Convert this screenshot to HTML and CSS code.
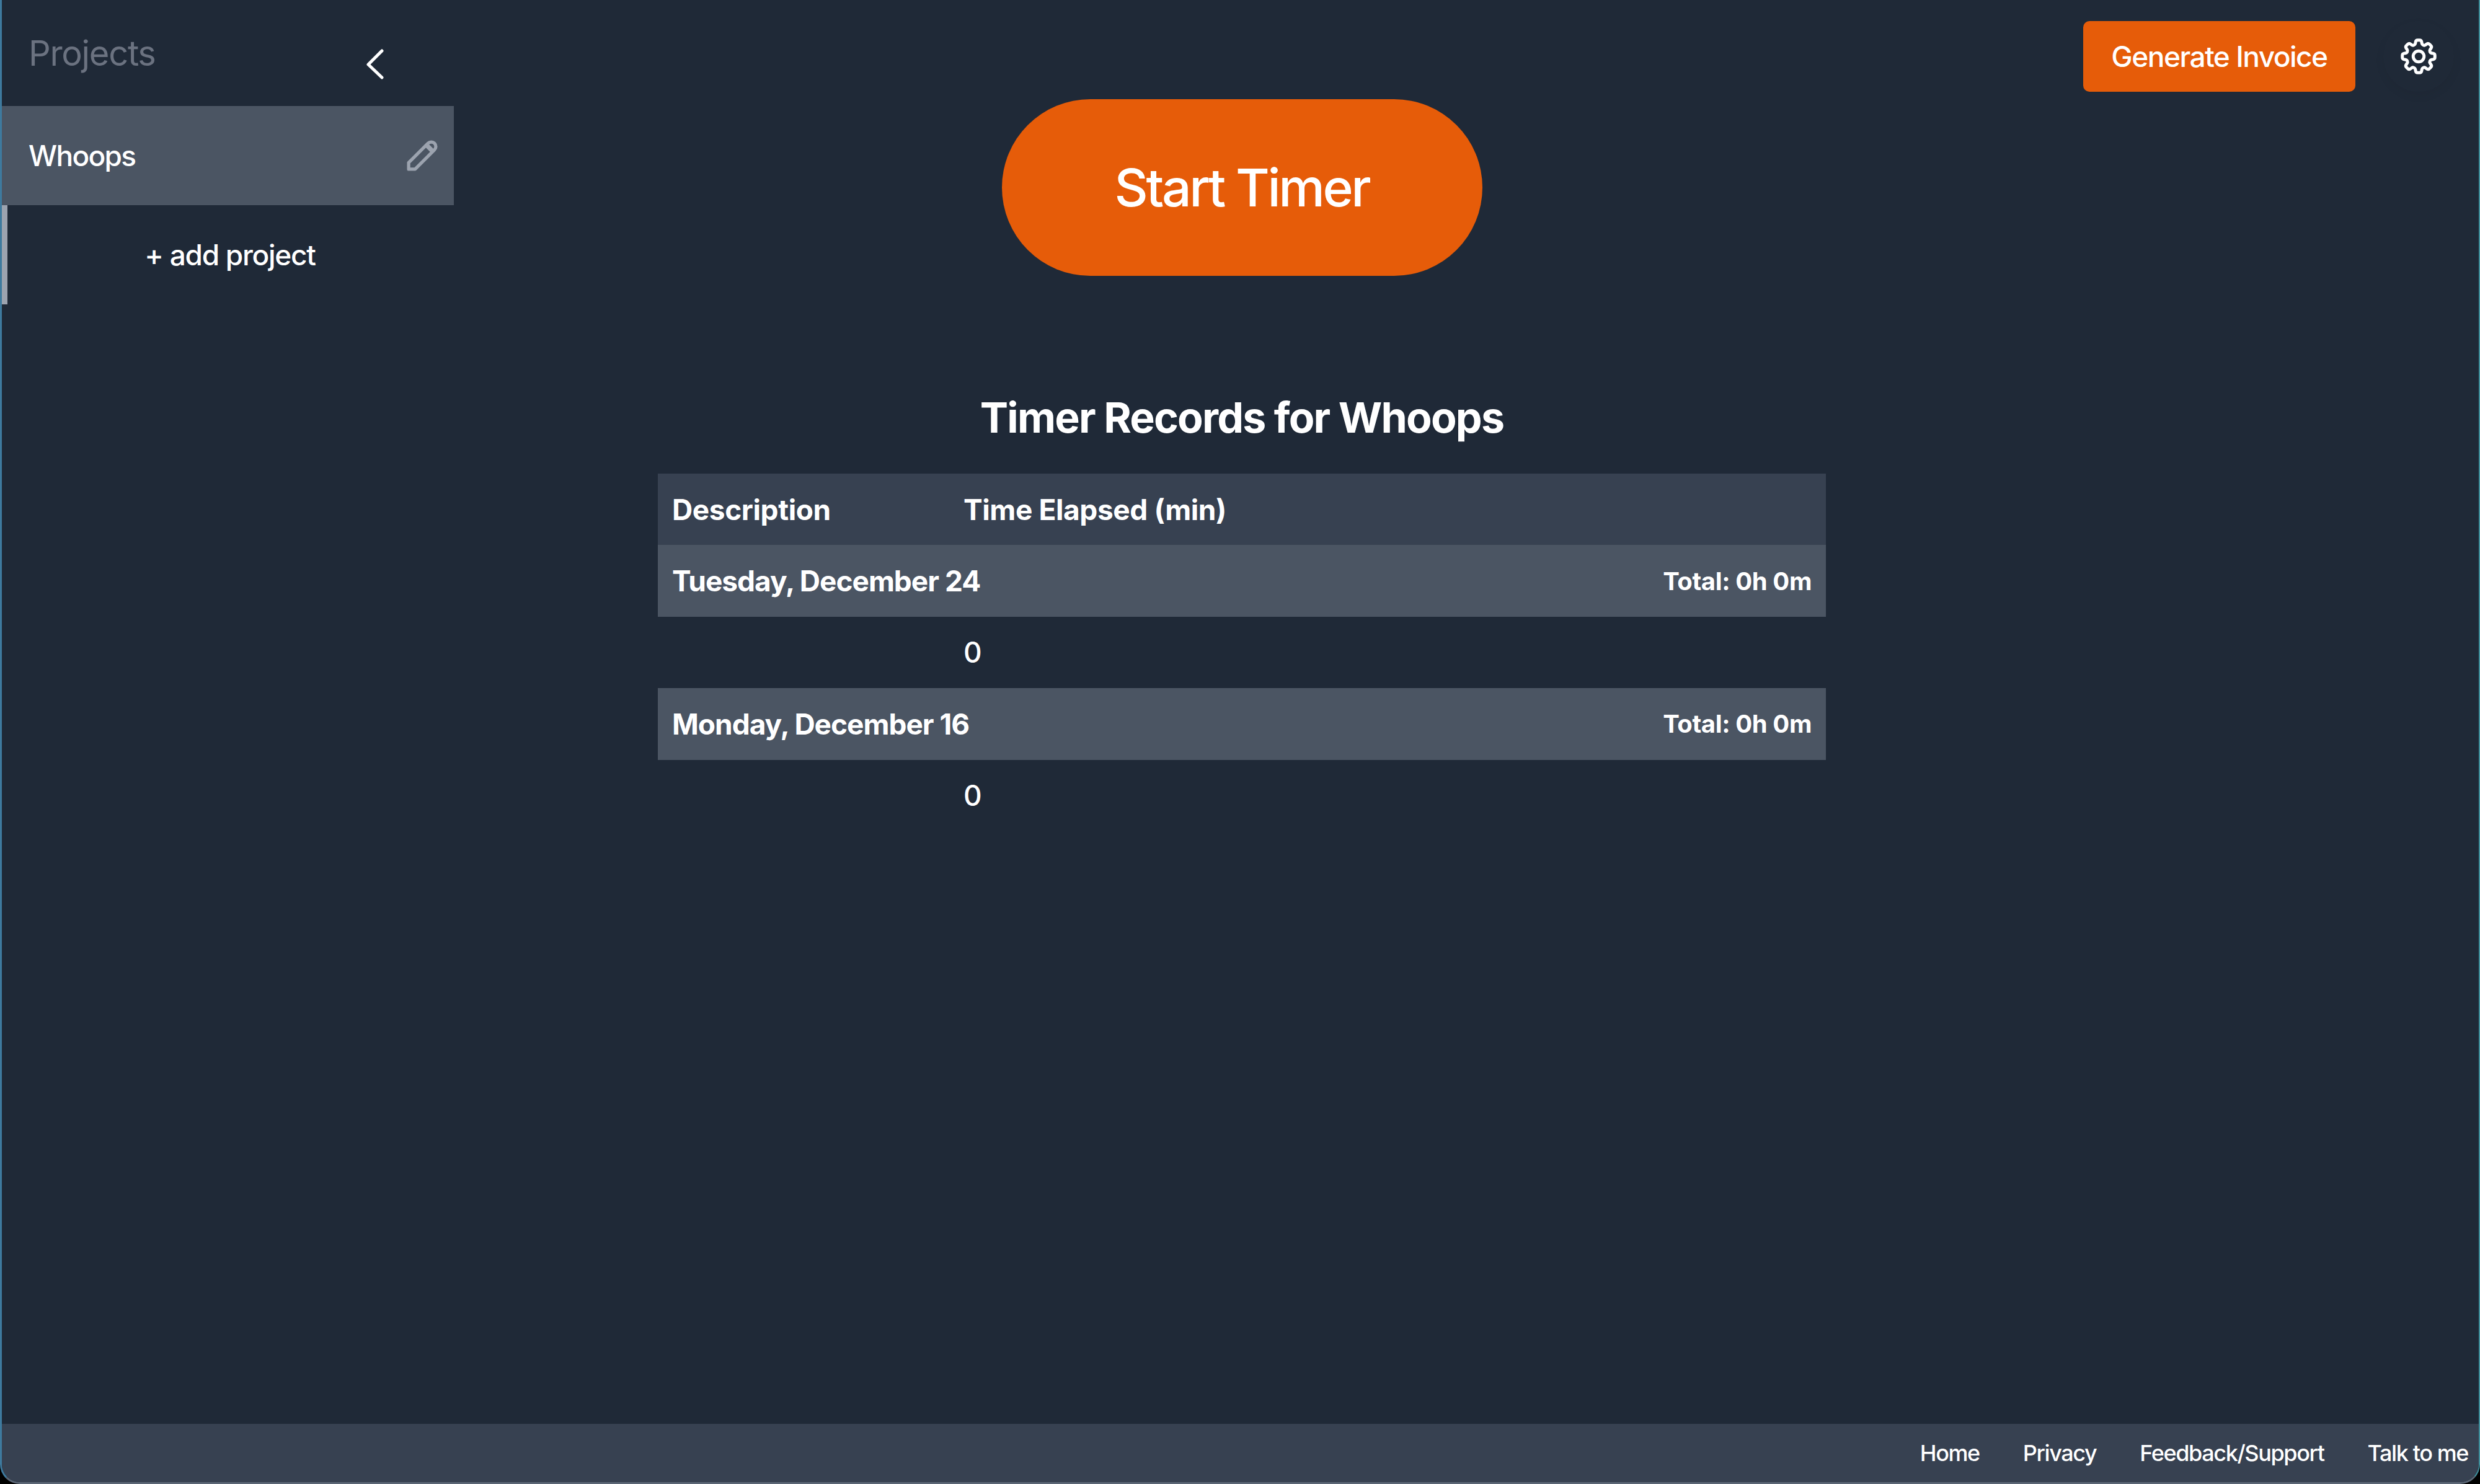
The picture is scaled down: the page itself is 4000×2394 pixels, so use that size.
FILE: index.html
```html
<!DOCTYPE html>
<html lang="en">
<head>
  <meta charset="UTF-8" />
  <title>Timer Records</title>
  <link rel="stylesheet" href="styles.css">
</head>
<body>
  <div class="window">
    <aside class="sidebar">
      <div class="sidebar-head">
        <h2 class="sidebar-title">Projects</h2>
        <svg class="chevron" viewBox="0 0 29 50" fill="none" stroke="#fff" stroke-width="5" stroke-linecap="round" stroke-linejoin="round">
          <path d="M26 4 L4 26 L26 47" />
        </svg>
      </div>
      <div class="project-row">
        <span>Whoops</span>
        <svg class="pencil" viewBox="0 0 48 48" fill="none" stroke="#9ca3af" stroke-width="5" stroke-linejoin="round">
          <path d="M3 45 V35 L33 5 a6.4 6.4 0 0 1 10 10 L13 45 Z" />
          <path d="M31 8 L40 17" stroke-width="7" />
        </svg>
      </div>
      <div class="add-project">+ add project</div>
      <div class="scroll-thumb"></div>
    </aside>

    <main class="main">
      <div class="topbar">
        <button class="invoice-btn">Generate Invoice</button>
        <div class="settings-btn">
          <svg viewBox="0 0 24 24" fill="none" stroke="#fff" stroke-width="1.7" stroke-linecap="round" stroke-linejoin="round">
            <path d="M10.343 3.94c.09-.542.56-.94 1.11-.94h1.093c.55 0 1.02.398 1.11.94l.149.894c.07.424.384.764.78.93.398.164.855.142 1.205-.108l.737-.527a1.125 1.125 0 011.45.12l.773.774c.39.389.44 1.002.12 1.45l-.527.737c-.25.35-.272.806-.107 1.204.165.397.505.71.93.78l.893.15c.543.09.94.56.94 1.109v1.094c0 .55-.397 1.02-.94 1.11l-.893.149c-.425.07-.765.383-.93.78-.165.398-.143.854.107 1.204l.527.738c.32.447.269 1.06-.12 1.45l-.774.773a1.125 1.125 0 01-1.449.12l-.738-.527c-.35-.25-.806-.272-1.203-.107-.397.165-.71.505-.781.929l-.149.894c-.09.542-.56.94-1.11.94h-1.094c-.55 0-1.019-.398-1.11-.94l-.148-.894c-.071-.424-.384-.764-.781-.93-.398-.164-.854-.142-1.204.108l-.738.527c-.447.32-1.06.269-1.45-.12l-.773-.774a1.125 1.125 0 01-.12-1.45l.527-.737c.25-.35.273-.806.108-1.204-.165-.397-.505-.71-.93-.78l-.894-.15c-.542-.09-.94-.56-.94-1.109v-1.094c0-.55.398-1.02.94-1.11l.894-.149c.424-.07.765-.383.93-.78.165-.398.143-.854-.107-1.204l-.527-.738a1.125 1.125 0 01.12-1.45l.773-.773a1.125 1.125 0 011.45-.12l.737.527c.35.25.807.272 1.204.107.397-.165.71-.505.78-.929l.15-.894z" />
            <path d="M15 12a3 3 0 11-6 0 3 3 0 016 0z" />
          </svg>
        </div>
      </div>

      <button class="start-btn">Start Timer</button>

      <h1 class="records-title">Timer Records for Whoops</h1>

      <div class="records">
        <div class="row head-row">
          <div class="col-desc">Description</div>
          <div>Time Elapsed (min)</div>
        </div>
        <div class="row day-row">
          <div>Tuesday, December 24</div>
          <div class="day-total">Total: 0h 0m</div>
        </div>
        <div class="row">
          <div class="col-desc"></div>
          <div>0</div>
        </div>
        <div class="row day-row">
          <div>Monday, December 16</div>
          <div class="day-total">Total: 0h 0m</div>
        </div>
        <div class="row">
          <div class="col-desc"></div>
          <div>0</div>
        </div>
      </div>
    </main>

    <footer class="footer">
      <a>Home</a>
      <a>Privacy</a>
      <a>Feedback/Support</a>
      <a>Talk to me</a>
    </footer>
  </div>
</body>
</html>
```

FILE: styles.css
```css
html, body {
  margin: 0;
  padding: 0;
  background-color: #000;
}
body {
  font-family: Inter, "Noto Sans", sans-serif;
  color: #fff;
}
.window {
  position: relative;
  box-sizing: border-box;
  width: 4000px;
  height: 2394px;
  display: flex;
  flex-direction: column;
  overflow: hidden;
  background-color: #1f2937;
  border-left: 3px solid #3e7a9e;
  border-right: 2px solid #3f8f9c;
  border-bottom: 3px solid #5b6675;
  border-radius: 0 0 32px 32px;
}
.sidebar {
  position: absolute;
  top: 0;
  left: 0;
  width: 729px;
}
.sidebar-head {
  height: 171px;
  display: flex;
  align-items: flex-start;
  justify-content: space-between;
  box-sizing: border-box;
  padding: 52px 113px 0 43px;
}
.sidebar-title {
  margin: 0;
  font-size: 56px;
  line-height: 68px;
  font-weight: 400;
  letter-spacing: -1.3px;
  color: #6b7280;
}
.chevron {
  width: 29px;
  height: 50px;
  margin-top: 26px;
}
.project-row {
  height: 160px;
  display: flex;
  align-items: center;
  justify-content: space-between;
  box-sizing: border-box;
  padding: 0 26px 0 43px;
  background-color: #4b5563;
  font-size: 46px;
  font-weight: 500;
  letter-spacing: -1.7px;
}
.pencil {
  width: 50px;
  height: 50px;
}
.add-project {
  height: 160px;
  display: flex;
  align-items: center;
  justify-content: center;
  padding-left: 7px;
  font-size: 46px;
  font-weight: 500;
  letter-spacing: -1.3px;
}
.scroll-thumb {
  position: absolute;
  top: 331px;
  left: 0;
  width: 9px;
  height: 160px;
  background-color: #9ca3af;
}
.main {
  flex: 1;
  display: flex;
  flex-direction: column;
  align-items: center;
  min-height: 0;
  padding-left: 5px;
}
.topbar {
  align-self: stretch;
  height: 160px;
  display: flex;
  align-items: flex-start;
  justify-content: flex-end;
  gap: 45px;
  box-sizing: border-box;
  padding: 34px 0 0 0;
}
.invoice-btn {
  width: 439px;
  height: 114px;
  border: none;
  border-radius: 10px;
  background-color: #e65c09;
  color: #fff;
  font-family: inherit;
  font-size: 46px;
  font-weight: 500;
  letter-spacing: -1.5px;
}
.settings-btn {
  width: 114px;
  height: 114px;
  margin-right: 40px;
  display: flex;
  align-items: center;
  justify-content: center;
  border-radius: 50%;
  box-shadow: 0 6px 16px rgba(0, 0, 0, 0.05);
}
.settings-btn svg {
  width: 70px;
  height: 70px;
}
.start-btn {
  width: 775px;
  height: 285px;
  border: none;
  border-radius: 143px;
  background-color: #e65c09;
  color: #fff;
  font-family: inherit;
  font-size: 84px;
  font-weight: 500;
  letter-spacing: -3.4px;
}
.records-title {
  margin: 185px 0 0 0;
  font-size: 68px;
  line-height: 86px;
  font-weight: 700;
  letter-spacing: -1.8px;
}
.records {
  width: 1884px;
  margin-top: 48px;
  font-size: 46px;
}
.row {
  height: 115.4px;
  display: flex;
  align-items: center;
  padding: 0 23px;
  font-weight: 500;
  letter-spacing: -0.5px;
}
.col-desc {
  width: 470px;
}
.head-row {
  background-color: #374151;
  font-weight: 700;
  letter-spacing: -0.4px;
}
.day-row {
  justify-content: space-between;
  background-color: #4b5563;
  font-weight: 700;
  letter-spacing: -1px;
}
.day-total {
  font-size: 40px;
  letter-spacing: -0.4px;
}
.footer {
  height: 94px;
  flex: none;
  display: flex;
  align-items: center;
  justify-content: flex-end;
  gap: 70px;
  box-sizing: border-box;
  padding-right: 17px;
  background-color: #374151;
  font-size: 36px;
  font-weight: 500;
  letter-spacing: -1.4px;
}
```
